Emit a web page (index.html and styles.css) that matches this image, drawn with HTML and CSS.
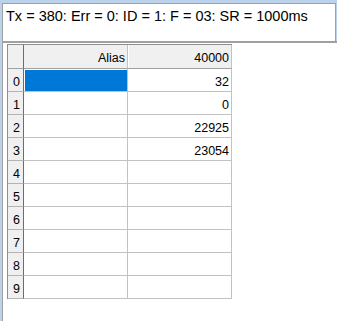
FILE: index.html
```html
<!DOCTYPE html>
<html lang="en">
<head>
    <meta charset="UTF-8">
    <meta name="viewport" content="width=device-width, initial-scale=1.0">
    <title>Modbus Poll</title>
    <link rel="stylesheet" href="styles.css">
</head>
<body>
    <div class="status">Tx = 380: Err = 0: ID = 1: F = 03: SR = 1000ms</div>

    <div class="panel">
        <div class="grid">
            <div class="cell corner"></div>
            <div class="cell colhead">Alias</div>
            <div class="cell colhead">40000</div>

            <div class="cell rowhead">0</div>
            <div class="cell selected"></div>
            <div class="cell">32</div>

            <div class="cell rowhead">1</div>
            <div class="cell"></div>
            <div class="cell">0</div>

            <div class="cell rowhead">2</div>
            <div class="cell"></div>
            <div class="cell">22925</div>

            <div class="cell rowhead">3</div>
            <div class="cell"></div>
            <div class="cell">23054</div>

            <div class="cell rowhead">4</div>
            <div class="cell"></div>
            <div class="cell"></div>

            <div class="cell rowhead">5</div>
            <div class="cell"></div>
            <div class="cell"></div>

            <div class="cell rowhead">6</div>
            <div class="cell"></div>
            <div class="cell"></div>

            <div class="cell rowhead">7</div>
            <div class="cell"></div>
            <div class="cell"></div>

            <div class="cell rowhead">8</div>
            <div class="cell"></div>
            <div class="cell"></div>

            <div class="cell rowhead">9</div>
            <div class="cell"></div>
            <div class="cell"></div>
        </div>
    </div>
</body>
</html>
```

FILE: styles.css
```css
html, body {
    height: 100%;
}
body {
    margin: 0;
    background-color: #bcd2ea;
    font-family: 'Liberation Sans', Arial, sans-serif;
    color: #000;
    display: flex;
    flex-direction: column;
    overflow: hidden;
}
.status {
    margin: 3px 1px 0 2px;
    height: 33px;
    padding: 4px 0 0 3px;
    background-color: #ffffff;
    border: 1px solid #a0a0a0;
    border-bottom: none;
    font-size: 14.5px;
    white-space: nowrap;
}
.panel {
    flex: 1;
    margin-left: 2px;
    padding: 1px 0 0 4px;
    background-color: #ffffff;
    border-top: 2px solid #a0a0a0;
    border-left: 1px solid #a0a0a0;
}
.grid {
    display: grid;
    grid-template-columns: 16px 104px 104px;
    grid-template-rows: 24px repeat(10, 23px);
    width: max-content;
    border-left: 1px solid #8f8f8f;
    border-top: 1px solid #8f8f8f;
}
.cell {
    box-sizing: border-box;
    padding: 5px 2px 0;
    line-height: 17px;
    font-size: 12.5px;
    text-align: right;
    border-right: 1px solid #c2c2c2;
    border-bottom: 1px solid #c2c2c2;
    background-color: #ffffff;
}
.corner,
.colhead,
.rowhead {
    background-color: #f0f0f0;
}
.corner {
    border-right-color: #6d6d6d;
    border-bottom-color: #a0a0a0;
}
.colhead {
    border-bottom-color: #a0a0a0;
}
.colhead + .colhead {
    box-shadow: inset 1px 0 0 #ffffff;
}
.rowhead {
    text-align: left;
    padding-left: 5px;
    border-right-color: #6d6d6d;
    border-bottom-color: #b4b4b4;
}
.selected {
    background-color: #0078d7;
    box-shadow: inset 1px 1px 0 #ffffff;
}
```
